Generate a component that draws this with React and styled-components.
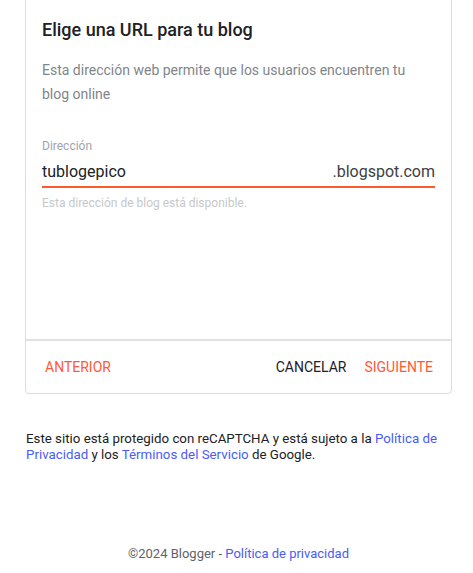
import styled, { createGlobalStyle } from "styled-components";

const GlobalStyle = createGlobalStyle`
  html, body {
    margin: 0;
    padding: 0;
    background: #fff;
    font-family: Roboto, "Liberation Sans", Arial, sans-serif;
  }
`;

const Page = styled.div`
  width: 473px;
  min-height: 573px;
  display: flex;
  flex-direction: column;
`;

const Card = styled.section`
  margin: -4px 21px 0 25px;
  border: 1px solid #dadce0;
  border-radius: 4px;
  display: flex;
  flex-direction: column;
`;

const Body = styled.div`
  height: 342px;
  padding: 21px 16px 0 16px;
  box-sizing: border-box;
`;

const Title = styled.h2`
  margin: 0;
  font-size: 18px;
  line-height: 24px;
  font-weight: 500;
  color: #202124;
`;

const Description = styled.p`
  margin: 16px 0 0;
  font-size: 14px;
  line-height: 24px;
  color: #80868b;
`;

const Field = styled.div`
  margin-top: 32px;
`;

const Label = styled.div`
  font-size: 12px;
  line-height: 16px;
  color: #a0a4a8;
`;

const InputRow = styled.div`
  display: flex;
  align-items: baseline;
  justify-content: space-between;
  margin-top: 7px;
  padding-bottom: 3px;
  border-bottom: 2px solid #fb5a2c;
  font-size: 16px;
  line-height: 22px;
`;

const Value = styled.span`
  color: #202124;
`;

const Suffix = styled.span`
  color: #3c4043;
`;

const Helper = styled.div`
  margin-top: 7px;
  font-size: 12px;
  line-height: 16px;
  color: #c6c8ca;
`;

const Actions = styled.div`
  display: flex;
  align-items: center;
  gap: 2px;
  height: 52px;
  padding: 0 10px 0 11px;
  border-top: 2px solid #dfe1e4;
`;

const Spacer = styled.div`
  flex: 1;
`;

const TextButton = styled.button`
  border: none;
  background: none;
  padding: 0 8px;
  height: 36px;
  font-family: inherit;
  font-size: 14px;
  font-weight: 400;
  text-transform: uppercase;
  color: ${({ $accent }) => ($accent ? "#ff5a36" : "#202124")};
  cursor: pointer;
`;

const Notice = styled.p`
  margin: 37px 21px 0 26px;
  font-size: 13.3px;
  line-height: 16px;
  color: #202124;
`;

const Link = styled.a`
  color: #4a5cf7;
  text-decoration: none;
`;

const Footer = styled.footer`
  margin-top: auto;
  padding: 0 0 11px 4px;
  text-align: center;
  font-size: 13px;
  line-height: 16px;
  color: #5f6368;
`;

export default function App() {
  return (
    <>
      <GlobalStyle />
      <Page>
        <Card>
          <Body>
            <Title>Elige una URL para tu blog</Title>
            <Description>
              Esta dirección web permite que los usuarios encuentren tu blog
              online
            </Description>
            <Field>
              <Label>Dirección</Label>
              <InputRow>
                <Value>tublogepico</Value>
                <Suffix>.blogspot.com</Suffix>
              </InputRow>
              <Helper>Esta dirección de blog está disponible.</Helper>
            </Field>
          </Body>
          <Actions>
            <TextButton $accent>Anterior</TextButton>
            <Spacer />
            <TextButton>Cancelar</TextButton>
            <TextButton $accent>Siguiente</TextButton>
          </Actions>
        </Card>
        <Notice>
          Este sitio está protegido con reCAPTCHA y está sujeto a la{" "}
          <Link href="#">Política de Privacidad</Link> y los{" "}
          <Link href="#">Términos del Servicio</Link> de Google.
        </Notice>
        <Footer>
          ©2024 Blogger - <Link href="#">Política de privacidad</Link>
        </Footer>
      </Page>
    </>
  );
}
